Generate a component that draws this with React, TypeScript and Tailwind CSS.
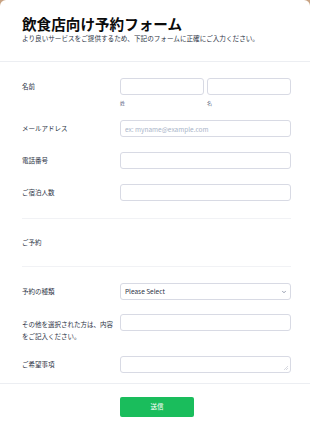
import { ChevronDown } from "lucide-react";

const FONT = { fontFamily: '"Noto Sans CJK JP", "Noto Sans", Inter, sans-serif' };

const inputCls =
  "block h-[17px] w-full rounded-[3px] border border-[#d8dae4] bg-white px-[4px] text-[6.5px] text-[#2c3345] outline-none placeholder:text-[#a9b4c8]";

function Label({ children, className = "" }: { children: React.ReactNode; className?: string }) {
  return (
    <div className={`w-[98px] shrink-0 pr-[2px] text-[6.5px] leading-[11px] text-[#2c3345] ${className}`}>
      {children}
    </div>
  );
}

export default function App() {
  return (
    <div className="min-h-[432px] w-[310px] bg-[#c8a383]" style={FONT}>
      <div className="h-[432px] w-full rounded-t-[6px] bg-white">
        {/* header */}
        <header className="h-[62px] border-b border-[#eceef2] px-[22px] pt-[14px]">
          <h1 className="text-[14.6px] font-bold leading-[19px] text-[#0b0b0b]">
            飲食店向け予約フォーム
          </h1>
          <p className="mt-[1px] text-[6.6px] leading-[9px] text-[#2c3345]">
            より良いサービスをご提供するため、下記のフォームに正確にご入力ください。
          </p>
        </header>

        <form className="pl-[22px] pr-[19px]" onSubmit={(e) => e.preventDefault()}>
          {/* 名前 */}
          <div className="flex pt-[16px]">
            <Label className="pt-[3px]">名前</Label>
            <div className="grid flex-1 grid-cols-2 gap-[3px]">
              <div>
                <input className={inputCls} />
                <p className="mt-[4px] text-[5px] leading-[8px] text-[#57647e]">姓</p>
              </div>
              <div>
                <input className={inputCls} />
                <p className="mt-[4px] text-[5px] leading-[8px] text-[#57647e]">名</p>
              </div>
            </div>
          </div>

          <div className="mt-[13px] flex items-center">
            <Label>メールアドレス</Label>
            <input className={inputCls} placeholder="ex: myname@example.com" />
          </div>

          <div className="mt-[15px] flex items-center">
            <Label>電話番号</Label>
            <input className={inputCls} />
          </div>

          <div className="mt-[15px] flex items-center">
            <Label>ご宿泊人数</Label>
            <input className={inputCls} />
          </div>

          <div className="mt-[17px] flex h-[49px] items-center border-y border-[#f1f2f5]">
            <Label>ご予約</Label>
          </div>

          <div className="mt-[16px] flex items-center">
            <Label>予約の種類</Label>
            <div className="relative flex h-[17px] flex-1 items-center rounded-[3px] border border-[#d8dae4] px-[4px] text-[6.5px] text-[#2c3345]">
              Please Select
              <ChevronDown className="absolute right-[3px] top-[5px] size-[6px] text-[#57647e]" strokeWidth={2.5} />
            </div>
          </div>

          <div className="mt-[14px] flex items-start">
            <Label className="pt-[4px] leading-[12px]">その他を選択された方は、内容をご記入ください。</Label>
            <input className={inputCls} />
          </div>

          <div className="mt-[14px] flex items-center">
            <Label>ご希望事項</Label>
            <div className="relative flex-1">
              <textarea className={`${inputCls} resize-none py-0`} rows={1} />
              <svg className="absolute bottom-[3px] right-[3px] size-[4px]" viewBox="0 0 4 4">
                <path d="M4 0L0 4M4 2L2 4" stroke="#c5c9d3" strokeWidth="0.7" />
              </svg>
            </div>
          </div>
        </form>

        <div className="mt-[10px] flex justify-center border-t border-[#eceef2] pl-[4px] pt-[13px]">
          <button
            type="submit"
            className="h-[20px] w-[74px] rounded-[2px] bg-[#1abd5c] text-[6.5px] text-white"
          >
            送信
          </button>
        </div>
      </div>
    </div>
  );
}
